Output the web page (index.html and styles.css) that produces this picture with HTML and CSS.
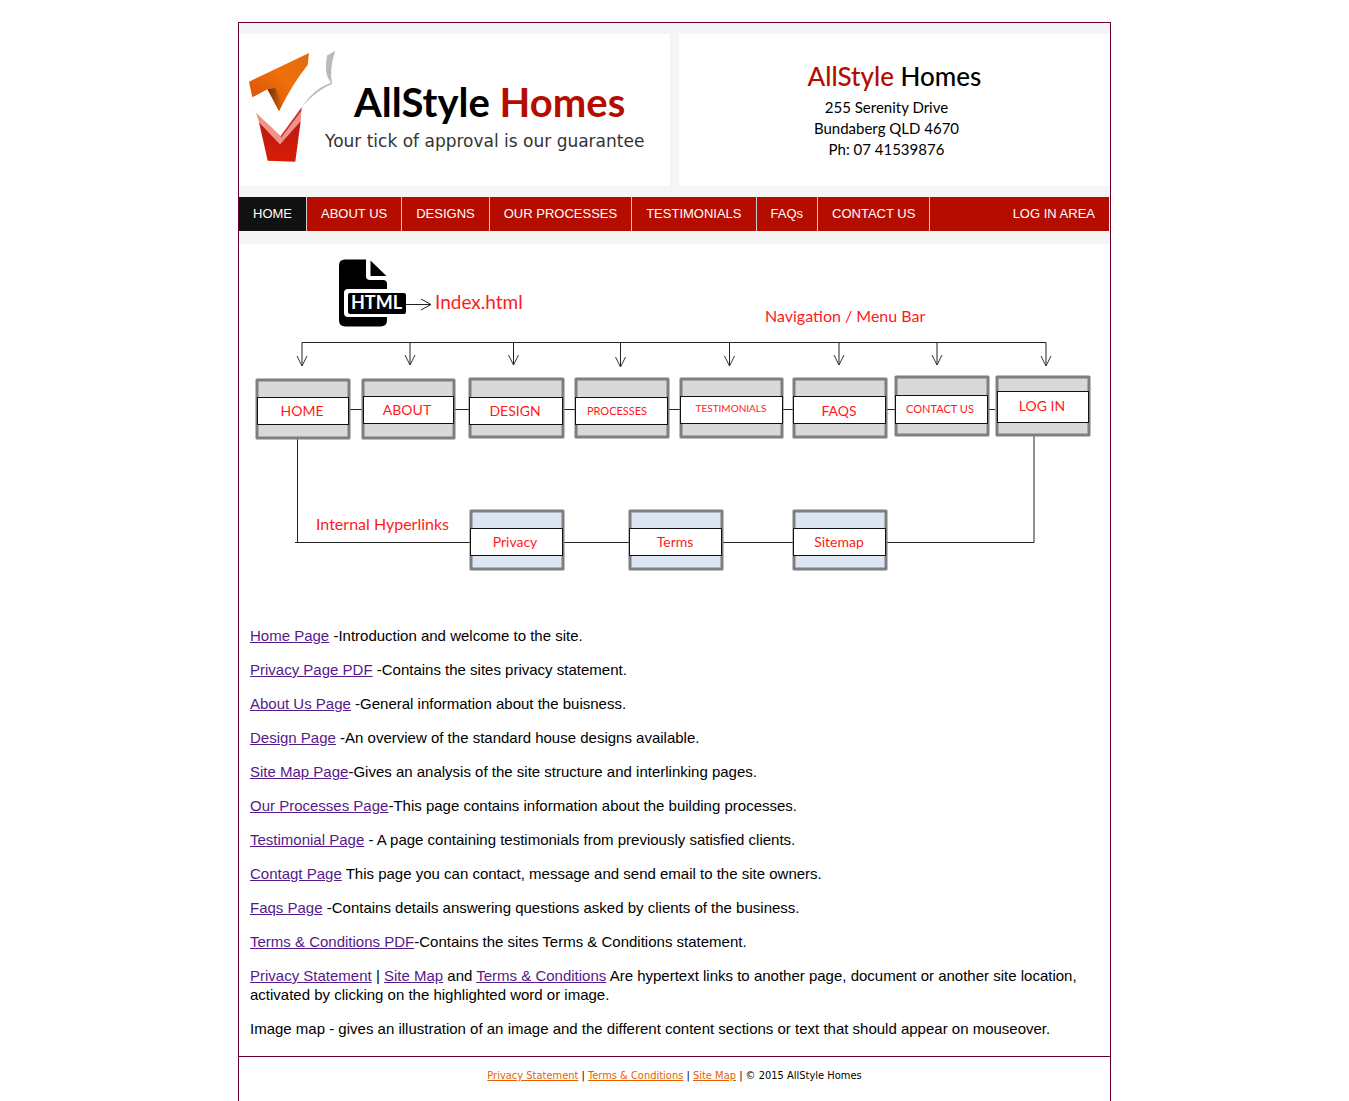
FILE: index.html
```html
<!DOCTYPE html>
<html lang="en">
<head>
<meta charset="utf-8">
<meta name="viewport" content="width=device-width, initial-scale=1">
<title>AllStyle Homes - Site Map</title>
<link rel="stylesheet" href="styles.css">
</head>
<body>
<div class="page">
  <header class="header">
    <div class="banner">
      <div class="panel brand">
        <svg class="brand-mark" viewBox="0 0 90 116" width="90" height="116" aria-hidden="true">
          <defs>
            <linearGradient id="orange" x1="0" y1="1" x2="1" y2="0">
              <stop offset="0" stop-color="#d84a0c"/>
              <stop offset="0.6" stop-color="#ee7208"/>
              <stop offset="1" stop-color="#e06a10"/>
            </linearGradient>
            <linearGradient id="red" x1="0" y1="0" x2="0" y2="1">
              <stop offset="0" stop-color="#b81a14"/>
              <stop offset="1" stop-color="#d81e04"/>
            </linearGradient>
            <linearGradient id="fold" x1="0" y1="0" x2="1" y2="0">
              <stop offset="0" stop-color="#6e2c08"/>
              <stop offset="1" stop-color="#d8640c"/>
            </linearGradient>
          </defs>
          <path fill="url(#orange)" d="M2 32.700L62 4L60.700 16Q46 34 32 62L20.500 40.300L5.300 48.300Z"/>
          <path fill="url(#fold)" d="M20.500 40.300L28.500 39L35 56L32 62Z"/>
          <path fill="#b9b9b9" d="M88.300 1.700L80 6.500Q77.500 22 81 29L84 33.700Q66 40 54.700 58.300Q68 42 85 35Q82 20 88.300 1.700Z"/>
          <path fill="#f0948a" d="M9 63.700L33.700 87L54.700 58.300L53.700 72L33 95.300L12 73.300Z"/>
          <path fill="#c43a2c" d="M33.700 87L54.700 58.300L54.300 62L34 89Z"/>
          <path fill="url(#red)" d="M12 73.300L33 95.300L53.700 72L48.300 112.700L20.700 111.700Z"/>
        </svg>
        <div class="brand-text">
          <p class="brand-name">AllStyle <span class="accent">Homes</span></p>
          <p class="brand-tagline">Your tick of approval is our guarantee</p>
        </div>
      </div>
      <div class="panel contact">
        <p class="contact-name"><span class="accent">AllStyle</span> Homes</p>
        <address class="contact-address">255 Serenity Drive<br>Bundaberg QLD 4670<br>Ph: 07 41539876</address>
      </div>
    </div>
    <nav class="nav" aria-label="Main">
      <a class="nav-link nav-link-active" href="#home">HOME</a>
      <a class="nav-link" href="#about">ABOUT US</a>
      <a class="nav-link" href="#designs">DESIGNS</a>
      <a class="nav-link" href="#processes">OUR PROCESSES</a>
      <a class="nav-link" href="#testimonials">TESTIMONIALS</a>
      <a class="nav-link" href="#faqs">FAQs</a>
      <a class="nav-link" href="#contact">CONTACT US</a>
      <a class="nav-link nav-link-login" href="#login">LOG IN AREA</a>
    </nav>
  </header>

  <main class="main">
    <svg class="diagram" viewBox="239 244 871 367" role="img" aria-label="Site structure">
      <g class="file-icon">
        <path d="M345 259.500H366V276Q366 280 370 280H383Q387 280 387 284V289H348Q344 289 344 293V313Q344 317 348 317H387V320Q387 326.500 380.500 326.500H345.500Q339 326.500 339 320V265.500Q339 259.500 345 259.500Z"/>
        <path d="M370.500 260.500L386.500 276H370.500Z"/>
        <rect x="348" y="293" width="58" height="21" rx="2"/>
      </g>
      <text class="file-text" x="376.500" y="309">HTML</text>

      <g class="line">
        <path d="M405 304.500H431M421 299L431 304.500L421 310"/>
        <path d="M302 366V342.500H1046V366"/>
        <path d="M410 342V365M513.500 342V365M620.500 342V367M729.500 342V366M839 342V365M937 342V365"/>
        <path d="M297.500 438V542.500M295 542.500H1034V435"/>
        <path d="M349 409.500H995"/>
      </g>
      <g class="arrow">
        <path d="M297 356L302 366L307 356"/>
        <path d="M405 355L410 365L415 355"/>
        <path d="M508.500 355L513.500 365L518.500 355"/>
        <path d="M615.500 357L620.500 367L625.500 357"/>
        <path d="M724.500 356L729.500 366L734.500 356"/>
        <path d="M834 355L839 365L844 355"/>
        <path d="M932 355L937 365L942 355"/>
        <path d="M1041 356L1046 366L1051 356"/>
      </g>

      <g class="box">
        <rect x="257" y="380" width="92" height="58"/>
        <rect x="363" y="380" width="91" height="58"/>
        <rect x="470" y="379" width="93" height="58"/>
        <rect x="576" y="379" width="92" height="58"/>
        <rect x="681" y="379" width="101" height="58"/>
        <rect x="794" y="379" width="92" height="58"/>
        <rect x="896" y="377" width="92" height="58"/>
        <rect x="997" y="377" width="92" height="58"/>
      </g>
      <g class="box box-internal">
        <rect x="471" y="511" width="92" height="58"/>
        <rect x="630" y="511" width="92" height="58"/>
        <rect x="794" y="511" width="92" height="58"/>
      </g>
      <g class="plate">
        <rect x="257.500" y="397.500" width="91" height="27"/>
        <rect x="363.500" y="396.500" width="90" height="27"/>
        <rect x="469.500" y="397.500" width="93" height="27"/>
        <rect x="575.500" y="397.500" width="92" height="27"/>
        <rect x="680.500" y="396.500" width="102" height="27"/>
        <rect x="793.500" y="396.500" width="92" height="27"/>
        <rect x="895.500" y="395.500" width="92" height="28"/>
        <rect x="997.500" y="391.500" width="91" height="31"/>
        <rect x="470.500" y="528.500" width="92" height="27"/>
        <rect x="629.500" y="528.500" width="92" height="27"/>
        <rect x="793.500" y="528.500" width="92" height="27"/>
      </g>

      <text class="label label-file" x="435" y="309">Index.html</text>
      <text class="label label-group" x="765" y="322">Navigation / Menu Bar</text>
      <text class="label label-group" x="316" y="530">Internal Hyperlinks</text>
      <g class="label label-box">
        <text x="302" y="416">HOME</text>
        <text x="407" y="415">ABOUT</text>
        <text x="515" y="416">DESIGN</text>
        <text x="839" y="416">FAQS</text>
        <text x="1042" y="411">LOG IN</text>
        <text x="515" y="547">Privacy</text>
        <text x="675" y="547">Terms</text>
        <text x="839" y="547">Sitemap</text>
      </g>
      <g class="label label-box label-small">
        <text x="617" y="415">PROCESSES</text>
        <text x="940" y="413">CONTACT US</text>
      </g>
      <g class="label label-box label-tiny">
        <text x="731" y="412">TESTIMONIALS</text>
      </g>
    </svg>

    <div class="copy">
      <p><a href="#home">Home Page</a> -Introduction and welcome to the site.</p>
      <p><a href="#privacy">Privacy Page PDF</a> -Contains the sites privacy statement.</p>
      <p><a href="#about">About Us Page</a> -General information about the buisness.</p>
      <p><a href="#designs">Design Page</a> -An overview of the standard house designs available.</p>
      <p><a href="#sitemap">Site Map Page</a>-Gives an analysis of the site structure and interlinking pages.</p>
      <p><a href="#processes">Our Processes Page</a>-This page contains information about the building processes.</p>
      <p><a href="#testimonials">Testimonial Page</a> - A page containing testimonials from previously satisfied clients.</p>
      <p><a href="#contact">Contagt Page</a> This page you can contact, message and send email to the site owners.</p>
      <p><a href="#faqs">Faqs Page</a> -Contains details answering questions asked by clients of the business.</p>
      <p><a href="#terms">Terms &amp; Conditions PDF</a>-Contains the sites Terms &amp; Conditions statement.</p>
      <p><a href="#privacy">Privacy Statement</a> | <a href="#sitemap">Site Map</a> and <a href="#terms">Terms &amp; Conditions</a> Are hypertext links to another page, document or another site location, activated by clicking on the highlighted word or image.</p>
      <p>Image map - gives an illustration of an image and the different content sections or text that should appear on mouseover.</p>
    </div>
  </main>

  <footer class="footer">
    <a href="#privacy">Privacy Statement</a> | <a href="#terms">Terms &amp; Conditions</a> | <a href="#sitemap">Site Map</a> | © 2015 AllStyle Homes
  </footer>
</div>
</body>
</html>
```

FILE: styles.css
```css
* {
  box-sizing: border-box;
}

body {
  margin: 0;
  background: #fff;
  color: #000;
  font-family: "Liberation Sans", Arial, sans-serif;
}

p {
  margin: 0;
}

.page {
  max-width: 873px;
  min-height: calc(100vh - 22px);
  margin: 22px auto 0;
  border: 1px solid #603;
  border-bottom: 0;
}

/* Header */

.header {
  padding: 11px 0 13px;
  background: #f5f5f5;
}

.banner {
  display: grid;
  grid-template-columns: 1fr 1fr;
  gap: 9px;
  margin-bottom: 11px;
}

.panel {
  display: flex;
  min-height: 152px;
  background: #fff;
}

.accent {
  color: #b50c00;
}

.brand {
  align-items: flex-start;
  padding: 15px 8px;
}

.brand-mark {
  flex: none;
}

.brand-text {
  flex: 1;
  margin-left: -12px;
  padding-top: 28px;
}

.brand-name {
  padding-left: 29px;
  font: 700 40px/50px Lato, sans-serif;
  white-space: nowrap;
}

.brand-tagline {
  padding-top: 4px;
  color: #333;
  font: 17px/20px "DejaVu Sans", Verdana, sans-serif;
  white-space: nowrap;
}

.contact {
  flex-direction: column;
  align-items: center;
  gap: 5px;
  padding-top: 26px;
}

.contact-name {
  font: 500 26px/32px Lato, sans-serif;
}

.contact-address {
  padding-right: 16px;
  font: 15px/21px Lato, sans-serif;
  text-align: center;
}

/* Navigation */

.nav {
  display: flex;
  margin-right: 1px;
  background: #b50c00;
}

.nav-link {
  padding: 0 14px;
  border-right: 1px solid #ccc;
  color: #fff;
  font-size: 13px;
  line-height: 34px;
  text-decoration: none;
}

.nav-link-active {
  background: #111;
}

.nav-link-login {
  margin-left: auto;
  border-right: 0;
}

/* Diagram */

.diagram {
  display: block;
  width: 100%;
}

.file-icon {
  fill: #000;
}

.file-text {
  fill: #fff;
  font: 700 18px Lato, sans-serif;
  text-anchor: middle;
}

.line {
  fill: none;
  stroke: #222;
  stroke-width: 1px;
}

.arrow {
  fill: none;
  stroke: #333;
  stroke-width: 1px;
}

.box {
  fill: #d9d9d9;
  stroke: #7f7f7f;
  stroke-width: 3px;
  stroke-linejoin: round;
}

.box-internal {
  fill: #dce6f2;
}

.plate {
  fill: #fff;
  stroke: #111;
  stroke-width: 1px;
}

.label {
  fill: #ff1a1a;
  font-family: Lato, Calibri, sans-serif;
}

.label-file {
  font-size: 19px;
}

.label-group {
  font-size: 16px;
}

.label-box {
  font-size: 14px;
  text-anchor: middle;
}

.label-small {
  font-size: 11px;
}

.label-tiny {
  font-size: 10px;
}

/* Page descriptions */

.copy {
  display: grid;
  gap: 15px;
  padding: 15px 11px 18px;
  font-size: 15px;
  line-height: 19px;
}

.copy a {
  color: #551a8b;
}

/* Footer */

.footer {
  padding: 11px;
  border-top: 1px solid #603;
  font: 11px/16px "DejaVu Sans Condensed", Tahoma, sans-serif;
  text-align: center;
}

.footer a {
  color: #e66000;
}
```
